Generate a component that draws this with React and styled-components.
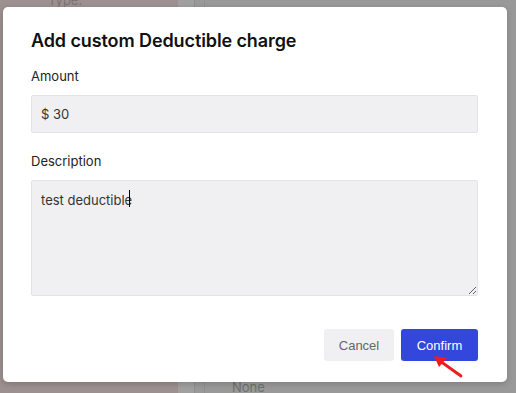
import React from 'react';
import styled, { createGlobalStyle } from 'styled-components';

const GlobalStyle = createGlobalStyle`
  html, body {
    margin: 0;
    padding: 0;
    width: 516px;
    height: 393px;
    overflow: hidden;
  }
  body {
    font-family: Inter, "Noto Sans", sans-serif;
  }
`;

const Page = styled.div`
  position: relative;
  width: 516px;
  height: 393px;
  display: flex;
  background: #999999;
  overflow: hidden;
`;

const SidePanel = styled.div`
  width: 178px;
  background: #9c9090;
  color: #7d7373;
  font-size: 13px;
  padding: 0 0 0 48px;
  box-sizing: border-box;
  display: flex;
  flex-direction: column;
  justify-content: space-between;
  line-height: 1;

  span {
    margin-top: -6px;
  }
`;

const Strip = styled.div`
  width: 16px;
  background: #a0a0a0;
  border-right: 1px solid #8e8e8e;
`;

const MainPanel = styled.div`
  flex: 1;
  display: flex;
  flex-direction: column;
  justify-content: flex-end;
  padding-left: 27px;
  color: #6f6f6f;
  font-size: 13px;
  border-left: 1px solid #909090;
  margin-left: 9px;

  span {
    margin-bottom: -2px;
  }
`;

const Modal = styled.div`
  position: absolute;
  left: 3px;
  top: 7px;
  width: 504px;
  height: 375px;
  box-sizing: border-box;
  background: #ffffff;
  border-radius: 5px;
  box-shadow: 0 2px 6px rgba(0, 0, 0, 0.18);
  padding: 22px 29px 21px 28px;
  display: flex;
  flex-direction: column;
`;

const Title = styled.h2`
  margin: 0;
  font-size: 18px;
  line-height: 24px;
  font-weight: 600;
  color: #111111;
  letter-spacing: -0.1px;
`;

const Label = styled.label`
  display: block;
  font-size: 13px;
  line-height: 18px;
  color: #222222;
  margin-top: ${(p) => p.$top}px;
  margin-bottom: 10px;
`;

const Input = styled.input`
  box-sizing: border-box;
  width: 100%;
  height: 38px;
  padding: 0 9px;
  border: 1px solid #e3e3e6;
  border-radius: 2px;
  background: #f0f0f2;
  font-family: Inter, "Noto Sans", sans-serif;
  font-size: 13px;
  color: #333333;
  outline: none;
`;

const AreaWrap = styled.div`
  position: relative;
`;

const TextArea = styled.textarea`
  display: block;
  box-sizing: border-box;
  width: 100%;
  height: 116px;
  padding: 10px 9px;
  border: 1px solid #e3e3e6;
  border-radius: 2px;
  background: #f0f0f2;
  font-family: Inter, "Noto Sans", sans-serif;
  font-size: 13px;
  line-height: 18px;
  color: #333333;
  outline: none;
`;

const Caret = styled.span`
  position: absolute;
  left: 98px;
  top: 10px;
  width: 1px;
  height: 17px;
  background: #000000;
`;

const Footer = styled.div`
  margin-top: auto;
  display: flex;
  justify-content: flex-end;
  gap: 7px;
  position: relative;
`;

const Button = styled.button`
  height: 32px;
  padding: 0 14px;
  border: none;
  border-radius: 3px;
  font-family: "Liberation Sans", Arial, sans-serif;
  font-size: 13px;
  background: ${(p) => (p.$primary ? '#3347dc' : '#f0f0f2')};
  color: ${(p) => (p.$primary ? '#ffffff' : '#666666')};
  min-width: ${(p) => (p.$primary ? 77 : 70)}px;
`;

const Arrow = styled.svg`
  position: absolute;
  right: 14px;
  top: 25px;
`;

export default function App() {
  return (
    <>
      <GlobalStyle />
      <Page>
        <SidePanel>
          <span>Type:</span>
          <span></span>
        </SidePanel>
        <Strip />
        <MainPanel>
          <span>None</span>
        </MainPanel>
        <Modal>
          <Title>Add custom Deductible charge</Title>
          <Label $top={14}>Amount</Label>
          <Input readOnly value="$ 30" />
          <Label $top={19}>Description</Label>
          <AreaWrap>
            <TextArea readOnly value="test deductible" />
            <Caret />
          </AreaWrap>
          <Footer>
            <Button>Cancel</Button>
            <Button $primary>Confirm</Button>
            <Arrow width="32" height="24" viewBox="0 0 32 24">
              <path d="M29 22 L8 7" stroke="#ee1c1c" strokeWidth="2.8" strokeLinecap="round" />
              <path d="M2 2 L15 4 L7 13 Z" fill="#ee1c1c" />
            </Arrow>
          </Footer>
        </Modal>
      </Page>
    </>
  );
}
